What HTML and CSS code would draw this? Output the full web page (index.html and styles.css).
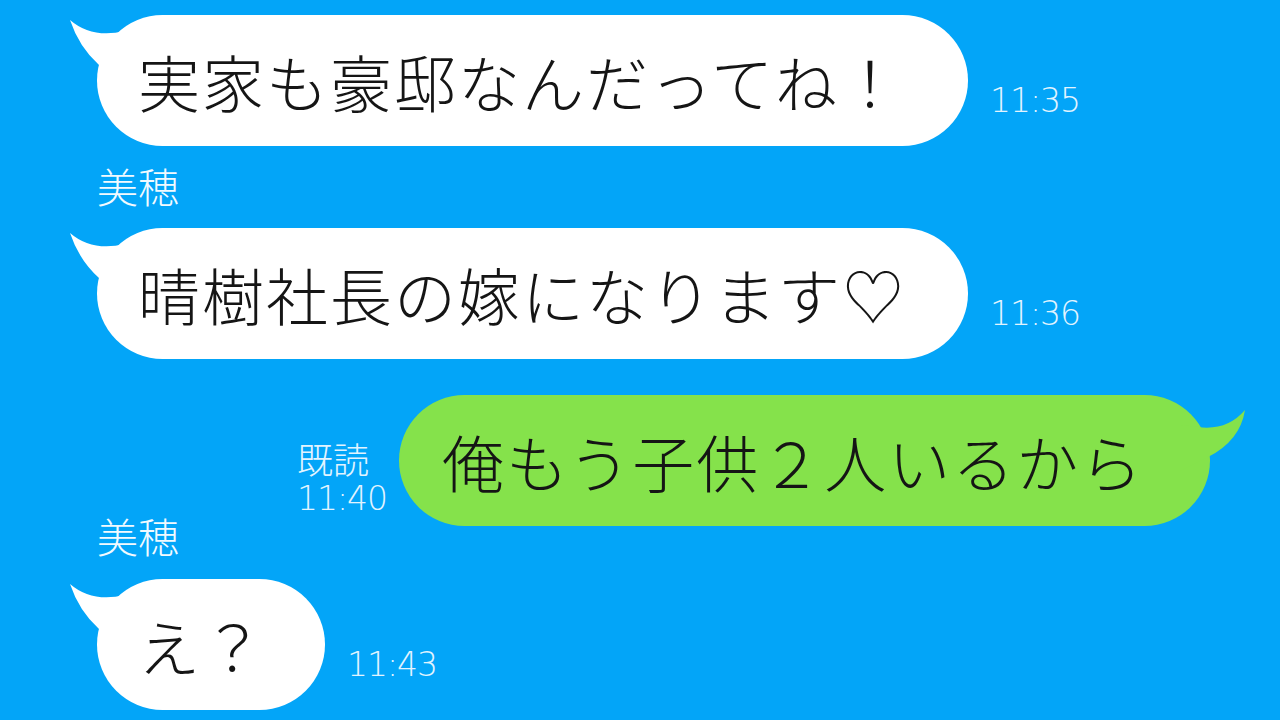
FILE: index.html
```html
<!DOCTYPE html>
<html lang="ja">
<head>
<meta charset="utf-8">
<link rel="stylesheet" href="styles.css">
</head>
<body>
<main class="chat">
  <div class="row row-first">
    <div class="bubble left w1">
      <svg class="tail tail-left" viewBox="0 0 60 70" width="60" height="70"><path d="M3 5 Q25 24 58 16 L58 66 L32 50 Q12 32 3 5 Z"/></svg>
      <span class="msg">実家も豪邸なんだってね！</span>
    </div>
    <span class="time t-left">11:35</span>
  </div>
  <div class="name">美穂</div>
  <div class="row">
    <div class="bubble left w2">
      <svg class="tail tail-left" viewBox="0 0 60 70" width="60" height="70"><path d="M3 5 Q25 24 58 16 L58 66 L32 50 Q12 32 3 5 Z"/></svg>
      <span class="msg">晴樹社長の嫁になります♡</span>
    </div>
    <span class="time t-left">11:36</span>
  </div>
  <div class="row row-right">
    <div class="meta">
      <span class="read">既読</span>
      <span class="time t-right">11:40</span>
    </div>
    <div class="bubble right w3">
      <svg class="tail tail-right" viewBox="0 0 80 80" width="80" height="80"><path d="M65 15 Q47 36 18 32 L0 30 L0 76 L28 62 Q60 46 65 15 Z"/></svg>
      <span class="msg">俺もう子供２人いるから</span>
    </div>
  </div>
  <div class="name name-2">美穂</div>
  <div class="row">
    <div class="bubble left w4">
      <svg class="tail tail-left" viewBox="0 0 60 70" width="60" height="70"><path d="M3 5 Q25 24 58 16 L58 66 L32 50 Q12 32 3 5 Z"/></svg>
      <span class="msg">え？</span>
    </div>
    <span class="time t-left">11:43</span>
  </div>
</main>
</body>
</html>
```
FILE: styles.css
```css
html, body {
  margin: 0;
  padding: 0;
}
body {
  width: 1280px;
  height: 720px;
  overflow: hidden;
  background: #03a5f8;
  font-family: "Noto Sans CJK JP", "Noto Sans", sans-serif;
}
.chat {
  display: flex;
  flex-direction: column;
  padding: 15px 0 0 97px;
}
.row {
  display: flex;
  align-items: flex-end;
}
.row-right {
  margin-top: 36px;
  padding-left: 200px;
}
.bubble {
  position: relative;
  height: 131px;
  border-radius: 66px;
  display: flex;
  align-items: center;
  box-sizing: border-box;
  padding-left: 41px;
  color: #151515;
}
.bubble.left { background: #ffffff; }
.bubble.right { background: #85e24b; padding-left: 43px; }
.w1 { width: 871px; }
.w2 { width: 871px; }
.w3 { width: 811px; }
.w4 { width: 228px; }
.msg {
  font-size: 62px;
  font-weight: 300;
  letter-spacing: 2px;
  line-height: 1;
  white-space: nowrap;
  position: relative;
}
.tail {
  position: absolute;
  top: 0;
}
.tail-left { left: -30px; fill: #ffffff; }
.tail-right { right: -50px; top: 0; fill: #85e24b; }
.time {
  font-family: "DejaVu Sans", sans-serif;
  font-weight: 200;
  font-size: 33px;
  letter-spacing: -1px;
  color: #e2f4ff;
  line-height: 1;
}
.t-left {
  margin-left: 22px;
  margin-bottom: 29px;
}
.meta {
  display: flex;
  flex-direction: column;
  margin-right: 12px;
  margin-bottom: 11px;
  color: #e2f4ff;
}
.read {
  font-size: 36px;
  font-weight: 300;
  line-height: 36px;
  margin-bottom: 6px;
}
.name {
  font-size: 41px;
  font-weight: 300;
  color: #f2faff;
  line-height: 1;
  margin-top: 19px;
  margin-bottom: 22px;
}
.name-2 {
  margin-top: -11px;
  margin-bottom: 23px;
}
```
